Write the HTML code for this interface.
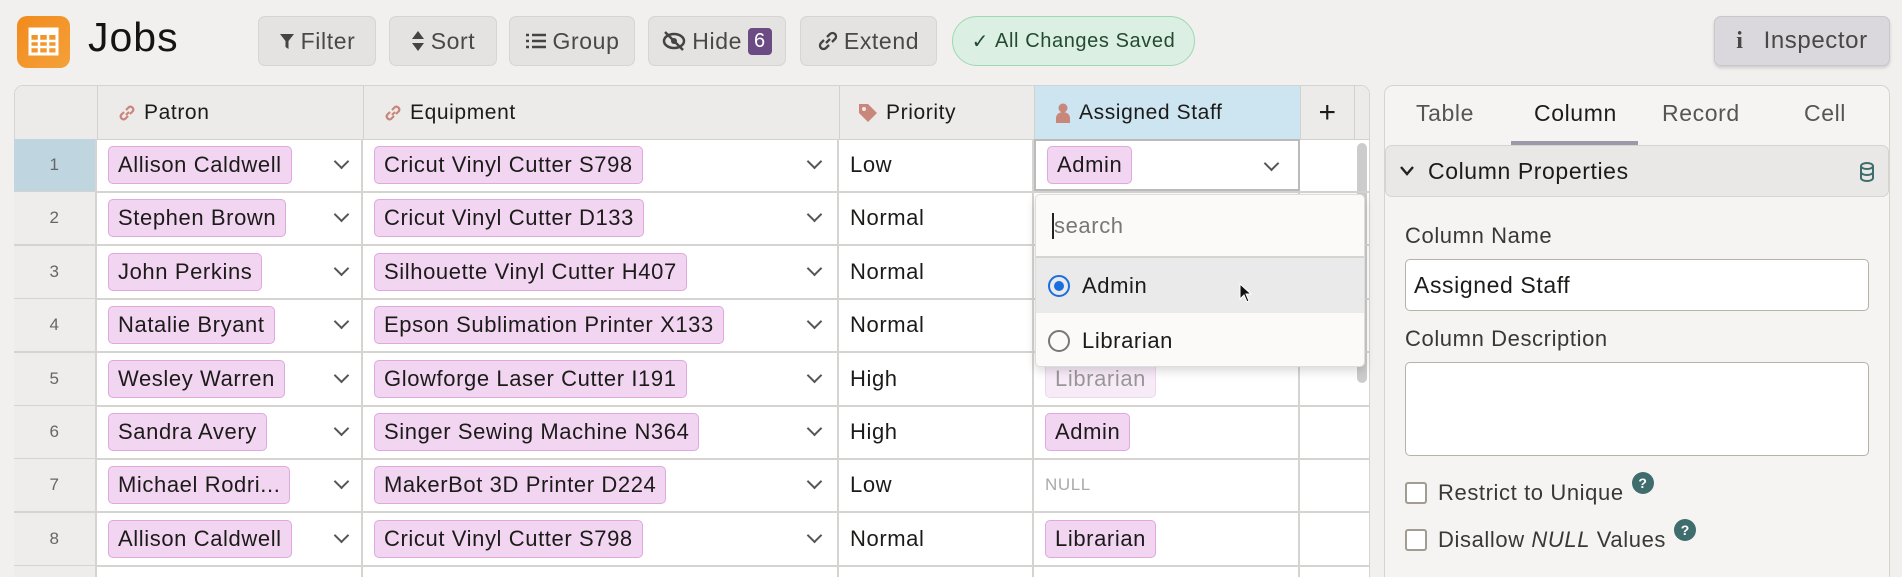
<!DOCTYPE html>
<html style="height:577px;overflow:hidden"><head><meta charset="utf-8"><style>
*{box-sizing:border-box;margin:0;padding:0}
body{width:1902px;height:577px;overflow:hidden;background:#f1f0ee;font-family:"Liberation Sans Narrow","Liberation Sans",sans-serif;color:#1c1b1a;font-size:22px;letter-spacing:.6px}
#wrap{position:relative;width:1902px;height:577px;overflow:hidden}
.a{position:absolute}
.btn{position:absolute;top:16px;height:50px;background:#e4e3e1;border:1px solid #d6d5d3;border-radius:7px;display:flex;align-items:center;justify-content:center;gap:6px;color:#4a4846;font-size:23px}
.card{position:absolute;left:14px;top:85px;width:1356px;height:492px;background:#fff;border:1px solid #d6d4d0;border-bottom:none;border-radius:9px 9px 0 0;overflow:hidden}
.hdr{position:absolute;top:0;height:54px;background:#ecebe9;border-right:1px solid #d3d1cd;border-bottom:1px solid #d3d1cd;display:flex;align-items:center;padding-left:20px;font-size:21px}
.row{position:absolute;left:0;width:1356px;height:54px;border-bottom:2px solid #d6d4d0}
.c{position:absolute;top:0;height:100%;border-right:2px solid #d6d4d0;display:flex;align-items:center}
.num{left:0;width:83px;background:#eeedeb;justify-content:center;color:#666;font-size:17px}
.pill{background:#f1d5f1;border:1px solid #dfa8df;border-radius:5px;padding:5px 9px;white-space:nowrap}
.chev{position:absolute;width:11px;height:11px;border-right:2px solid #555;border-bottom:2px solid #555;transform:rotate(45deg)}
.lbl{position:absolute;left:1405px;font-size:22px;color:#3a3836}
.q{display:inline-block;width:22px;height:22px;border-radius:50%;background:#3f6d6d;color:#fff;font-size:14px;font-weight:bold;text-align:center;line-height:22px;vertical-align:top;margin-left:8px;margin-top:-8px;letter-spacing:0}
</style></head><body><div id="wrap">
<div class="a" style="left:17px;top:16px;width:53px;height:52px;border-radius:10px;background:linear-gradient(135deg,#f28a1c,#f4a13a)">
<svg width="53" height="52" viewBox="0 0 53 52"><rect x="13" y="13" width="27" height="25" fill="none" stroke="#fff" stroke-width="3"/><rect x="13" y="13" width="27" height="6" fill="#fff"/><path d="M13 25H40M13 31H40M22 19V38M31 19V38" stroke="#fff" stroke-width="2.5"/></svg></div>
<div class="a" style="left:88px;top:14px;font-family:'Liberation Sans',sans-serif;font-size:41px;letter-spacing:1px;color:#151412">Jobs</div>
<div class="btn" style="left:258px;width:118px"><svg width="16" height="18"><path d="M1 2H15L9.5 9V17L6.5 15V9Z" fill="#444"/></svg>Filter</div>
<div class="btn" style="left:389px;width:108px"><svg width="14" height="22"><path d="M7 1L13 9H1ZM7 21L13 13H1Z" fill="#444"/></svg>Sort</div>
<div class="btn" style="left:509px;width:126px"><svg width="22" height="18"><path d="M1 3h3M1 9h3M1 15h3M7 3h14M7 9h14M7 15h14" stroke="#444" stroke-width="2.5"/></svg>Group</div>
<div class="btn" style="left:648px;width:138px"><svg width="24" height="20"><ellipse cx="12" cy="10" rx="10" ry="7" fill="none" stroke="#444" stroke-width="2.5"/><circle cx="12" cy="10" r="3" fill="#444"/><path d="M3 1L21 19" stroke="#444" stroke-width="2.5"/></svg>Hide<span style="background:#6a4b84;color:#fff;border-radius:4px;padding:2px 6px;font-size:20px">6</span></div>
<div class="btn" style="left:800px;width:137px"><svg width="20" height="20"><path d="M8 12l4-4M6 9l-3 3a3 3 0 0 0 5 5l3-3M14 11l3-3a3 3 0 0 0-5-5l-3 3" fill="none" stroke="#444" stroke-width="2.3"/></svg>Extend</div>
<div class="btn" style="left:952px;width:243px;background:#dbefe2;border-color:#9fd8b2;border-radius:26px;color:#244a33;font-size:20px"><span>✓</span>All Changes Saved</div>
<div class="btn" style="left:1714px;width:176px;background:#dad8dc;border-color:#c9c7cc;box-shadow:0 2px 3px rgba(0,0,0,.15);font-size:24px;gap:20px"><span style="font-family:'Liberation Serif',serif;font-weight:bold">i</span>Inspector</div>

<div class="card">
<div class="hdr" style="left:0;width:83px"></div>
<div class="hdr" style="left:83px;width:266px"><svg width="18" height="18" style="margin-right:8px"><path d="M8 11l3-3M6 8l-3 3a3 3 0 0 0 4 4l3-3M12 10l3-3a3 3 0 0 0-4-4l-3 3" fill="none" stroke="#c9867a" stroke-width="2.2"/></svg>Patron</div>
<div class="hdr" style="left:349px;width:476px"><svg width="18" height="18" style="margin-right:8px"><path d="M8 11l3-3M6 8l-3 3a3 3 0 0 0 4 4l3-3M12 10l3-3a3 3 0 0 0-4-4l-3 3" fill="none" stroke="#c9867a" stroke-width="2.2"/></svg>Equipment</div>
<div class="hdr" style="left:825px;width:195px;padding-left:18px"><svg width="20" height="20" style="margin-right:8px"><path d="M1 1H10L19 10L10 19L1 10Z" fill="#c9867a"/><circle cx="6" cy="6" r="2" fill="#ecebe9"/></svg>Priority</div>
<div class="hdr" style="left:1020px;width:266px;background:#cde4f1"><svg width="16" height="20" style="margin-right:8px"><circle cx="8" cy="5" r="4.5" fill="#c9867a"/><path d="M1 20V15a7 6 0 0 1 14 0V20Z" fill="#c9867a"/></svg>Assigned Staff</div>
<div class="hdr" style="left:1286px;width:54px;justify-content:center;padding:0;font-size:30px">+</div>
<div class="hdr" style="left:1340px;width:16px;border-right:none"></div>
<div class="a" style="left:1342px;top:57px;width:10px;height:240px;background:#ccc;border-radius:5px"></div>
</div>

<div id="rows"></div>
<script>
var d=[["Allison Caldwell","Cricut Vinyl Cutter S798","Low","Admin"],["Stephen Brown","Cricut Vinyl Cutter D133","Normal",""],["John Perkins","Silhouette Vinyl Cutter H407","Normal",""],["Natalie Bryant","Epson Sublimation Printer X133","Normal",""],["Wesley Warren","Glowforge Laser Cutter I191","High","Librarian"],["Sandra Avery","Singer Sewing Machine N364","High","Admin"],["Michael Rodri...","MakerBot 3D Printer D224","Low","NULL"],["Allison Caldwell","Cricut Vinyl Cutter S798","Normal","Librarian"],["","","",""]];
var h="";
d.forEach(function(r,i){var t=139+i*53.4;
h+='<div class="row a" style="left:14px;top:'+t+'px'+(i==8?';height:11px;border-bottom:none':'')+'">';
h+='<div class="c num" style="'+(i==0?'background:#bfd5e0':'')+'">'+(i<8?i+1:'')+'</div>';
h+='<div class="c" style="left:83px;width:266px;padding-left:11px">'+(r[0]?'<span class="pill">'+r[0]+'</span><i class="chev" style="left:239px;top:17px"></i>':'')+'</div>';
h+='<div class="c" style="left:349px;width:476px;padding-left:11px">'+(r[1]?'<span class="pill">'+r[1]+'</span><i class="chev" style="left:446px;top:17px"></i>':'')+'</div>';
h+='<div class="c" style="left:825px;width:195px;padding-left:11px">'+r[2]+'</div>';
var s=r[3]=="NULL"?'<span style="color:#aaa;font-size:17px">NULL</span>':(r[3]?'<span class="pill"'+(i==4?' style="opacity:.45"':'')+'>'+r[3]+'</span>':'');
h+='<div class="c" style="left:1020px;width:266px;padding-left:11px;'+(i==0?'border:2px solid #bbb;':'')+'">'+s+(i==0?'<i class="chev" style="left:230px;top:17px"></i>':'')+'</div>';
h+='</div>';});
document.getElementById('rows').innerHTML=h;
</script>

<div class="a" style="left:1035px;top:194px;width:330px;height:173px;background:#fbfaf8;border:1px solid #ddd;border-radius:5px;box-shadow:0 4px 10px rgba(0,0,0,.15);overflow:hidden">
<div style="height:63px;border-bottom:2px solid #d6d4d0;display:flex;align-items:center;padding-left:16px;color:#777"><span style="border-left:2px solid #222;padding-left:0">search</span></div>
<div style="height:55px;background:#ebeaea;display:flex;align-items:center;padding-left:12px;gap:12px"><span style="width:22px;height:22px;border:2px solid #1a6fe0;border-radius:50%;display:inline-flex;align-items:center;justify-content:center"><i style="width:10px;height:10px;background:#1a6fe0;border-radius:50%"></i></span>Admin<svg width="14" height="20" style="margin-left:80px;margin-top:14px"><path d="M1 1V16L5 12L8 19L10 18L7 11H12Z" fill="#111" stroke="#fff"/></svg></div>
<div style="height:55px;display:flex;align-items:center;padding-left:12px;gap:12px"><span style="width:22px;height:22px;border:2px solid #777;border-radius:50%"></span>Librarian</div>
</div>

<div class="a" style="left:1384px;top:85px;width:506px;height:492px;background:#f5f4f2;border:1px solid #d6d4d0;border-bottom:none;border-radius:9px 9px 0 0"></div>
<div class="a" style="left:1384px;top:100px;width:506px;font-size:23px;color:#555">
<span class="a" style="left:32px">Table</span><span class="a" style="left:150px;color:#1c1b1a">Column</span><span class="a" style="left:278px">Record</span><span class="a" style="left:420px">Cell</span></div>
<div class="a" style="left:1511px;top:141px;width:127px;height:4px;background:#9c99a8"></div>
<div class="a" style="left:1385px;top:145px;width:504px;height:52px;background:#e9e8e6;border:1px solid #d6d4d0;border-radius:7px;display:flex;align-items:center;padding-left:14px;font-size:23px"><svg width="14" height="10" style="margin-right:14px"><path d="M1 1L7 8L13 1" fill="none" stroke="#222" stroke-width="2.4"/></svg>Column Properties<svg class="a" style="right:14px;top:16px" width="14" height="20"><ellipse cx="7" cy="4" rx="6" ry="3" fill="none" stroke="#3f6d6d" stroke-width="2"/><path d="M1 4V16a6 3 0 0 0 12 0V4M1 10a6 3 0 0 0 12 0" fill="none" stroke="#3f6d6d" stroke-width="2"/></svg></div>
<div class="lbl" style="top:223px">Column Name</div>
<div class="a" style="left:1405px;top:259px;width:464px;height:52px;background:#fff;border:1px solid #b6b2a8;border-radius:5px;padding:12px 8px;font-size:23px">Assigned Staff</div>
<div class="lbl" style="top:326px">Column Description</div>
<div class="a" style="left:1405px;top:362px;width:464px;height:94px;background:#fff;border:1px solid #b6b2a8;border-radius:5px"></div>
<div class="a" style="left:1405px;top:482px;width:22px;height:22px;border:2px solid #a19d92;border-radius:3px;background:#fff"></div>
<div class="lbl" style="left:1438px;top:480px">Restrict to Unique<span class="q">?</span></div>
<div class="a" style="left:1405px;top:529px;width:22px;height:22px;border:2px solid #a19d92;border-radius:3px;background:#fff"></div>
<div class="lbl" style="left:1438px;top:527px">Disallow <i>NULL</i> Values<span class="q">?</span></div>
</div></body></html>
